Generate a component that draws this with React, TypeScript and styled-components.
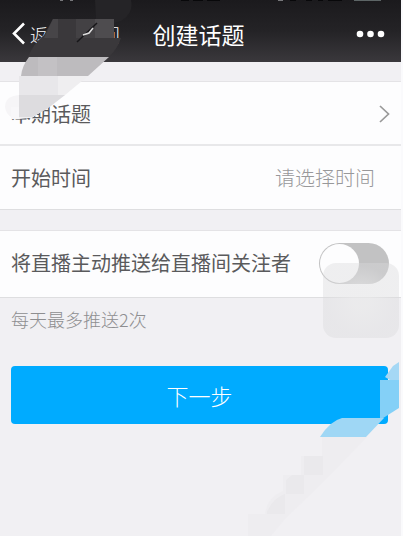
import React, { useState } from "react";
import styled, { createGlobalStyle } from "styled-components";

const GlobalStyle = createGlobalStyle`
  * { box-sizing: border-box; }
  body {
    margin: 0;
    background: #f1f0f3;
    font-family: "Noto Sans CJK SC", sans-serif;
    font-weight: 300;
    color: #444;
  }
  button, input { font: inherit; }
`;

const Page = styled.main`
  position: relative;
  min-height: 100vh;
  overflow: hidden;
  border-right: 2px solid #fafafc;
`;

const Header = styled.header`
  position: relative;
  display: grid;
  grid-template-columns: 1fr auto 1fr;
  align-items: center;
  height: 62px;
  padding: 5px 16px 0 12px;
  color: #fff;
  background: linear-gradient(#1b1a1d, #242326 50%, #3a383c);
`;

const StatusMarks = styled.svg`
  position: absolute;
  top: 0;
  left: 0;
`;

const HeaderButton = styled.button<{ $end?: boolean }>`
  display: flex;
  align-items: center;
  justify-self: ${(p) => (p.$end ? "end" : "start")};
  gap: 4px;
  padding: 0;
  border: 0;
  background: none;
  color: inherit;
  font-size: 18px;
  line-height: 28px;
  white-space: nowrap;
`;

const Title = styled.h1`
  margin: 0;
  font-size: 23px;
  line-height: 32px;
  font-weight: 400;
`;

const Group = styled.section`
  margin-top: 19px;
  background: #fdfdfe;
  border-top: 1px solid #e4e3e6;
  border-bottom: 1px solid #dedee0;

  & + & { margin-top: 20px; }
`;

const rowStyle = `
  display: flex;
  align-items: center;
  justify-content: space-between;
  width: 100%;
  height: 64px;
  padding: 2px 11px 0;
  border: 0;
  background: none;
  color: inherit;
  font-size: 20px;
  line-height: 30px;
  text-align: left;
`;

const RowText = styled.span`
  font-weight: 400;
  color: #5a5a5c;
`;

const LinkRow = styled.button`
  ${rowStyle}
  border-bottom: 2px solid #e8e8ea;
`;

const TimeRow = styled.label`
  ${rowStyle}
  height: 63px;
  padding: 0 26px 0 11px;
`;

const TimeInput = styled.input`
  width: 160px;
  padding: 0;
  border: 0;
  outline: 0;
  background: none;
  text-align: right;

  &::placeholder { color: #98989a; opacity: 1; }
`;

const SwitchRow = styled.label`
  ${rowStyle}
  height: 66px;
  padding: 0 12px 2px 11px;
`;

const Switch = styled.input`
  appearance: none;
  flex: none;
  width: 70px;
  height: 41px;
  margin: 0;
  padding: 1px;
  border-radius: 21px;
  background: #c2c2c3;

  &::before {
    content: "";
    display: block;
    width: 39px;
    height: 39px;
    border-radius: 50%;
    background: #fdfdfe;
  }

  &:checked { background: #00abff; }
  &:checked::before { margin-left: 29px; }
`;

const Hint = styled.p`
  margin: 7px 11px 0;
  color: #8e8e90;
  font-size: 18px;
  line-height: 28px;
`;

const NextButton = styled.button`
  display: block;
  width: calc(100% - 24px);
  height: 58px;
  margin: 33px 13px 0 11px;
  padding: 0;
  border: 0;
  border-radius: 4px;
  background: #00abff;
  color: #fff;
  font-size: 22px;
  line-height: 32px;
`;

const AssistTouch = styled.div`
  position: absolute;
  top: 263px;
  right: 2px;
  width: 76px;
  height: 75px;
  border-radius: 13px;
  background: radial-gradient(circle, rgba(232, 232, 233, 0.7) 15%, rgba(217, 217, 219, 0.4) 65%);
  pointer-events: none;
`;

const Patch = styled.svg<{ $end?: boolean }>`
  position: absolute;
  top: ${(p) => (p.$end ? "360px" : "0")};
  ${(p) => (p.$end ? "right: 0;" : "left: 0;")}
  pointer-events: none;
`;

export default function App() {
  const [push, setPush] = useState(false);
  const [time, setTime] = useState("");

  return (
    <>
      <GlobalStyle />
      <Page>
        <Header>
          <StatusMarks width="401" height="1" aria-hidden="true">
            <path d="M181 0h8M193 0h10M207 0h13M290 0h6M306 0h6M318 0h5M328 0h14" stroke="#08080a" strokeWidth="2" fill="none" />
            <path d="M60 0h3M70 0h3M278 0h5" stroke="#77777a" strokeWidth="2" />
            <path d="M354 0h27" stroke="#5d6566" strokeWidth="2" />
          </StatusMarks>
          <HeaderButton type="button">
            <svg width="14" height="23" viewBox="0 0 14 23" fill="none" aria-hidden="true">
              <path d="M12 1.5 2 11.5l10 10" stroke="currentColor" strokeWidth="2.6" />
            </svg>
            返回直播间
          </HeaderButton>
          <Title>创建话题</Title>
          <HeaderButton type="button" $end aria-label="更多">
            <svg width="29" height="8" viewBox="0 0 29 8" fill="currentColor" aria-hidden="true">
              <circle cx="4" cy="4" r="3.3" />
              <circle cx="14.5" cy="4" r="3.3" />
              <circle cx="25" cy="4" r="3.3" />
            </svg>
          </HeaderButton>
        </Header>

        <Group>
          <LinkRow type="button">
            <RowText>本期话题</RowText>
            <svg width="11" height="18" viewBox="0 0 11 18" fill="none" aria-hidden="true">
              <path d="m1 1 8.5 8L1 17" stroke="#999" strokeWidth="1.7" />
            </svg>
          </LinkRow>
          <TimeRow>
            <RowText>开始时间</RowText>
            <TimeInput value={time} placeholder="请选择时间" onChange={(e) => setTime(e.target.value)} />
          </TimeRow>
        </Group>

        <Group>
          <SwitchRow>
            <RowText>将直播主动推送给直播间关注者</RowText>
            <Switch type="checkbox" role="switch" checked={push} onChange={(e) => setPush(e.target.checked)} />
          </SwitchRow>
        </Group>
        <Hint>每天最多推送2次</Hint>
        <NextButton type="button">下一步</NextButton>

        <AssistTouch />
        <Patch width="140" height="125" aria-hidden="true">
          <path d="M95 0h36q3 13-10 21l-7 2v-4H96z" fill="#252427" />
          <path d="M53 19h61v19h7q-3 10-12 19H28q6-14 16-22z" fill="#3a383b" />
          <path d="M53 19h5v19H44z" fill="#474548" />
          <path d="M76 19h38v19H76z" fill="#434144" />
          <path d="M95 19h19v19H95z" fill="#4e4c4f" />
          <path d="m77 42 20-19" stroke="#171619" strokeWidth="1.5" />
          <path d="m83 35 6-2 4-5" stroke="#ddd" strokeWidth="1.5" fill="none" />
          <path d="M29 57h80L88 76H21q1-10 8-19z" fill="#bdbbbe" />
          <path d="M38 57h19v19H38z" fill="#c3c1c4" />
          <path d="M19 95v24q-12 0-14-12 0-11 14-12z" fill="#f6f5f7" />
          <path d="M11 107h26v7l-8 4-10 1h-8z" fill="#f8f7f9" />
          <path d="M19 76h69L65 95 45 109l-13 9H19z" fill="#efeef0" />
          <path d="M19 76h39v19H19z" fill="#e8e7ea" />
          <path d="M19 95h46l-18 14-15 8H19z" fill="#dddcdf" />
        </Patch>
        <Patch $end width="161" height="176" aria-hidden="true">
          <path d="M150 20h9V2l-6 4-8 11z" fill="#a5d8f5" />
          <path d="M140 20h19v28l-19 12z" fill="#84d0f7" />
          <path d="M80 77q10-16 22-19h42l-18 19z" fill="#9fd7f5" />
          <path d="M82 77h45L99 106 70 135 45 159l-14 17H8v-22h17q2-17 18-23v-16h18V96h21z" fill="#ecebee" opacity=".6" />
          <path d="M64 96h19v19H64zM46 134v-14l6-5h12v19zM27 152q6-14 18-18v20H27z" fill="#e8e7ea" opacity=".7" />
        </Patch>
      </Page>
    </>
  );
}
